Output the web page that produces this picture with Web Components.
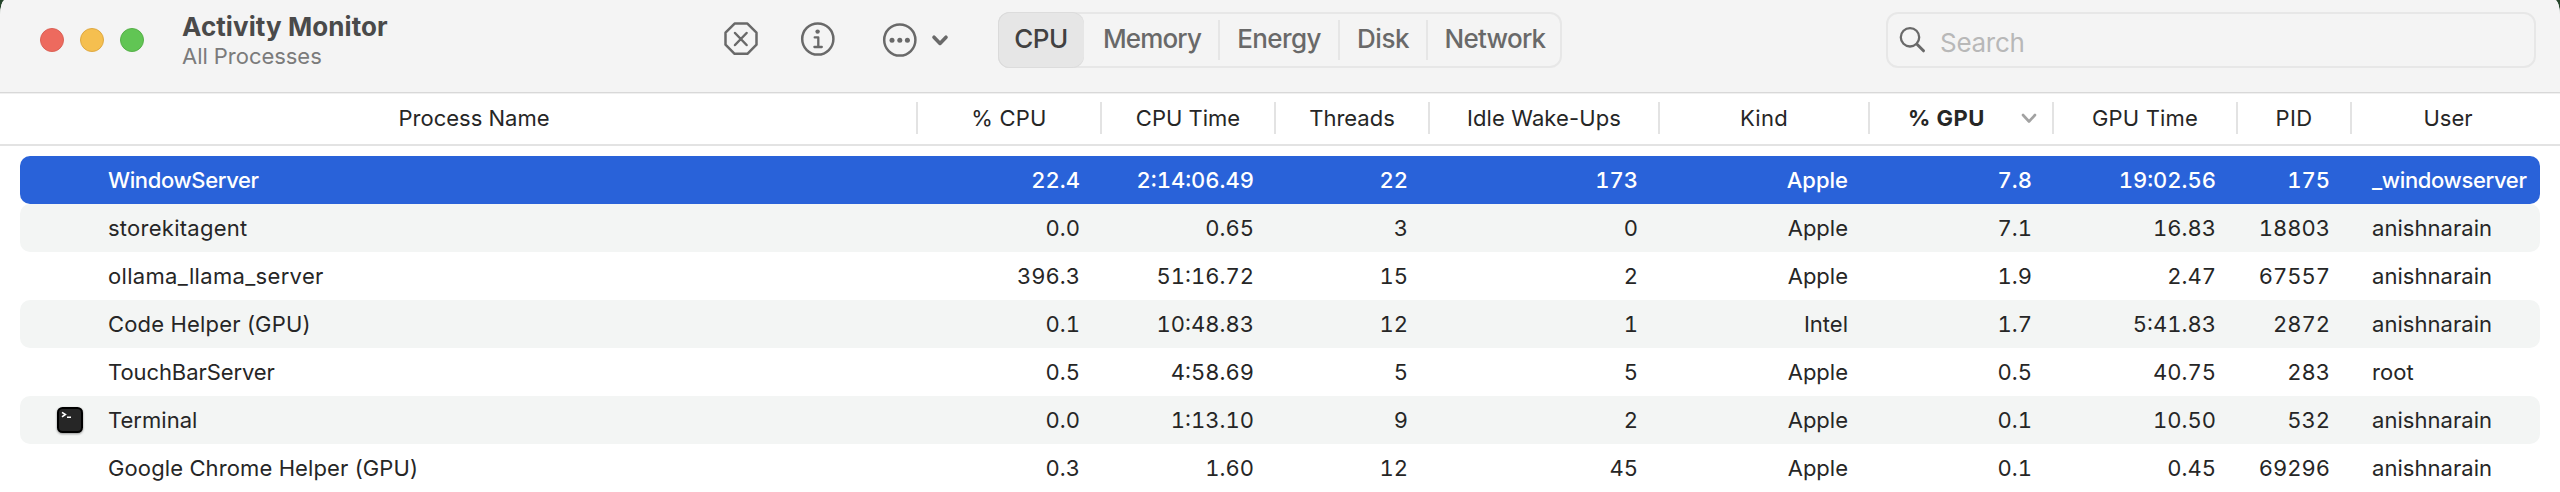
<!DOCTYPE html>
<html lang="en"><head><meta charset="utf-8"><title>Activity Monitor</title>
<style>
html,body{margin:0;height:100%;overflow:hidden;background:#26452b}
body{font-family:Inter,"Liberation Sans",sans-serif;font-size:22px;color:#262626}
</style></head><body>
<am-window>
  <am-toolbar slot="toolbar">
    <am-lights></am-lights>
    <am-title heading="Activity Monitor" sub="All Processes"></am-title>
    <am-actions></am-actions>
    <am-tabs></am-tabs>
    <am-search></am-search>
  </am-toolbar>
  <am-table></am-table>
</am-window>
<script>
const define = (name, render) => customElements.define(name, class extends HTMLElement {
  connectedCallback() {
    if (this.shadowRoot) return;
    this.attachShadow({ mode: 'open' }).innerHTML = '<style>*{box-sizing:border-box}</style>' + render(this);
  }
});

define('am-window', () => `
<style>:host{display:flex;flex-direction:column;width:2560px;height:492px;background:#fff;border-radius:5px 5px 0 0/16px 16px 0 0;overflow:hidden}</style>
<slot name="toolbar"></slot><slot></slot>`);

define('am-toolbar', () => `
<style>:host{display:flex;flex:none;align-items:flex-start;height:94px;box-sizing:border-box;background:#f4f4f4;border-bottom:1px solid #f0f0f0;box-shadow:inset 0 -1px #d8d8d8}</style>
<slot></slot>`);

define('am-lights', () => `
<style>:host{display:flex;gap:16px;padding:28px 0 0 40px;width:182px;box-sizing:border-box}
i{width:24px;height:24px;border-radius:50%;background:var(--c);border:1px solid var(--b)}</style>
<i style="--c:#ed6a5e;--b:#db6156"></i><i style="--c:#f5bf4f;--b:#dfa942"></i><i style="--c:#61c554;--b:#56b048"></i>`);

define('am-title', el => `
<style>:host{display:block;width:540px;padding-top:11px;white-space:nowrap}
b{display:block;font-size:26px;line-height:32px;color:#4a4a4a;letter-spacing:.08px}
span{display:block;line-height:26px;color:#7b7b7b;letter-spacing:-.04px}</style>
<b>${el.getAttribute('heading')}</b><span>${el.getAttribute('sub')}</span>`);

define('am-actions', () => `
<style>:host{display:flex;width:276px;padding-top:20px}
svg{flex:none;fill:none;stroke:#696969;stroke-width:2.5;stroke-linecap:round;stroke-linejoin:round}
.dot{fill:#696969;stroke:none}svg+svg{margin-left:39px}svg+svg.more{margin-left:44px}</style>
<svg width="38" height="40" viewBox="722 20 38 40"><path d="M734.6 23.6h12.8l9.1 9.1v12l-9.1 9.1h-12.8l-9.1-9.1v-12zM735 33l11.6 12M746.6 33L735 45"/></svg>
<svg width="38" height="40" viewBox="799 20 38 40"><circle cx="817.8" cy="39" r="15.6"/><circle class="dot" cx="817.6" cy="31.6" r="2.2"/><path d="M814.7 37.4h3.6v9.4M814.4 47h7.4" stroke-width="2.3"/></svg>
<svg class="more" width="70" height="40" viewBox="881 20 70 40"><circle cx="899.8" cy="40" r="15.6"/><g class="dot"><circle cx="892" cy="40.3" r="2.5"/><circle cx="899.8" cy="40.3" r="2.5"/><circle cx="907.4" cy="40.3" r="2.5"/></g><path d="M934 37.2l6 6.2 6-6.2" stroke-width="3.6"/></svg>`);

define('am-tabs', () => `
<style>:host{display:flex;flex:none;width:564px;height:56px;margin-top:12px;box-sizing:border-box;box-shadow:inset 0 0 0 2px #e7e7e7;border-radius:12px;font-size:26px;font-weight:500;color:#696969}
span{display:flex;align-items:center;justify-content:center;height:56px;padding-bottom:3px;white-space:nowrap}
.on{width:86px;background:#e6e6e6;border-radius:12px;color:#414141;box-shadow:inset 1px 0 #dadada,inset 0 1px #dcdcdc,inset 0 -1px #dcdcdc;letter-spacing:-.5px}
i{width:2px;height:40px;margin-top:8px;background:#e6e6e6}</style>
<span class="on">CPU</span><span style="width:134px;padding-left:2px;letter-spacing:-.85px">Memory</span><i></i><span style="width:118px;letter-spacing:-.6px">Energy</span><i></i><span style="width:86px;letter-spacing:-.45px">Disk</span><i></i><span style="width:134px;letter-spacing:-.75px">Network</span>`);

define('am-search', () => `
<style>:host{display:flex;flex:none;align-items:center;width:650px;height:56px;margin:12px 0 0 324px;box-sizing:border-box;border:2px solid #e7e7e7;border-radius:12px;font-size:26px;color:#b8b8b8}
svg{margin-left:10px;flex:none;fill:none;stroke:#696969;stroke-linecap:round}
span{padding:5px 0 0 12px;letter-spacing:-.28px}</style>
<svg width="30" height="30" viewBox="1898 26 30 30"><circle cx="1910" cy="38.3" r="9.2" stroke-width="2.3"/><path d="M1917 45.3l6.5 6.5" stroke-width="3"/></svg><span>Search</span>`);

const COLS = '184px 174px 154px 230px 210px 184px 184px 114px';

define('am-head', () => `
<style>:host{display:grid;grid-template-columns:918px ${COLS} 1fr;height:54px;align-items:center;border-bottom:2px solid #e3e3e3;box-sizing:border-box;white-space:nowrap}
div{height:32px;line-height:32px;text-align:center;border-right:2px solid #e3e3e3}
div:first-of-type{padding-left:32px}div:last-of-type{border:0;padding-right:16px}
.sort{display:flex;align-items:center;font-weight:700;padding-left:38px;letter-spacing:.5px}
.sort svg{margin-left:35px;fill:none;stroke:#a2a2a2;stroke-width:2.6;stroke-linecap:round;stroke-linejoin:round}</style>
<div>Process Name</div><div style="letter-spacing:.2px">% CPU</div><div>CPU Time</div><div>Threads</div><div style="letter-spacing:.1px">Idle Wake-Ups</div><div style="letter-spacing:.3px">Kind</div><div class="sort"><span>% GPU</span><svg width="18" height="14"><path d="M3 4l6 6.5L15 4"/></svg></div><div style="letter-spacing:.17px">GPU Time</div><div style="letter-spacing:.4px">PID</div><div>User</div>`);

define('am-row', el => {
  const v = el.getAttribute('values').split('|');
  const on = el.hasAttribute('selected');
  return `
<style>:host{display:grid;grid-template-columns:898px ${COLS} 1fr;height:48px;line-height:48px;border-radius:10px;white-space:nowrap}
:host([striped]){background:#f3f5f4}
:host([selected]){background:#2962d9;color:#fff;font-weight:500}
div{text-align:right;padding-right:22px}
.num{letter-spacing:0;font-feature-settings:"tnum"}
.name{display:flex;text-align:left;letter-spacing:${el.getAttribute('spacing')}px}
.icon{width:88px;display:flex;align-items:center;padding-left:34px}
.user{text-align:left;padding:0 0 0 20px;letter-spacing:${on ? -.36 : .04}px}</style>
<div class="name"><span class="icon"><slot></slot></span><span>${v[0]}</span></div>` +
  v.slice(1).map((t, i) => `<div class="${i === 8 ? 'user' : i === 4 ? '' : 'num'}">${t}</div>`).join('');
});

define('am-terminal-icon', () => `
<style>:host{display:block;height:32px}svg{display:block;filter:drop-shadow(0 1px 1px #0006)}</style>
<svg width="32" height="32" viewBox="54 404 32 32"><rect x="57" y="407" width="26" height="26" rx="5.5" fill="#000"/><rect x="59" y="409" width="22" height="22" rx="3.5" fill="#262626"/><path d="M62 412.3l3.4 2.2-3.4 2.4M67 417.2h4" fill="none" stroke="#fff" stroke-width="1.6"/></svg>`);

define('am-table', () => `
<style>:host{display:block;margin-top:-2px}section{padding:10px 20px 0}</style>
<am-head></am-head>
<section>
<am-row selected spacing="-.38" values="WindowServer|22.4|2:14:06.49|22|173|Apple|7.8|19:02.56|175|_windowserver"></am-row>
<am-row striped spacing=".26" values="storekitagent|0.0|0.65|3|0|Apple|7.1|16.83|18803|anishnarain"></am-row>
<am-row spacing=".33" values="ollama_llama_server|396.3|51:16.72|15|2|Apple|1.9|2.47|67557|anishnarain"></am-row>
<am-row striped spacing=".16" values="Code Helper (GPU)|0.1|10:48.83|12|1|Intel|1.7|5:41.83|2872|anishnarain"></am-row>
<am-row spacing="-.08" values="TouchBarServer|0.5|4:58.69|5|5|Apple|0.5|40.75|283|root"></am-row>
<am-row striped spacing=".02" values="Terminal|0.0|1:13.10|9|2|Apple|0.1|10.50|532|anishnarain"><am-terminal-icon></am-terminal-icon></am-row>
<am-row spacing=".11" values="Google Chrome Helper (GPU)|0.3|1.60|12|45|Apple|0.1|0.45|69296|anishnarain"></am-row>
</section>`);
</script></body></html>
